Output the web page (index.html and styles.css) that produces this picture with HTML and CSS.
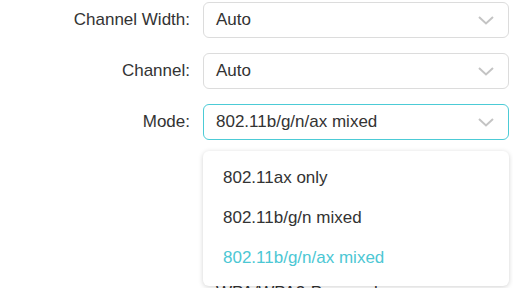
FILE: index.html
```html
<!DOCTYPE html>
<html>
<head>
<meta charset="utf-8">
<link rel="stylesheet" href="styles.css">
</head>
<body>
<div class="form">
  <div class="row">
    <label class="label">Channel Width:</label>
    <div class="select"><span class="value">Auto</span><svg class="chev" width="16" height="9" viewBox="0 0 16 9"><path d="M1 1 L8 7.5 L15 1" fill="none" stroke="#c4c4c4" stroke-width="2"/></svg></div>
  </div>
  <div class="row">
    <label class="label">Channel:</label>
    <div class="select"><span class="value">Auto</span><svg class="chev" width="16" height="9" viewBox="0 0 16 9"><path d="M1 1 L8 7.5 L15 1" fill="none" stroke="#c4c4c4" stroke-width="2"/></svg></div>
  </div>
  <div class="row">
    <label class="label">Mode:</label>
    <div class="select-wrap">
      <div class="select focus"><span class="value">802.11b/g/n/ax mixed</span><svg class="chev" width="16" height="9" viewBox="0 0 16 9"><path d="M1 1 L8 7.5 L15 1" fill="none" stroke="#c4c4c4" stroke-width="2"/></svg></div>
      <ul class="menu">
        <li class="item">802.11ax only</li>
        <li class="item">802.11b/g/n mixed</li>
        <li class="item selected">802.11b/g/n/ax mixed</li>
      </ul>
    </div>
  </div>
  <div class="row below">
    <label class="label"></label>
    <div class="plain">WPA/WPA2-Personal</div>
  </div>
</div>
</body>
</html>
```
FILE: styles.css
```css
html, body {
  margin: 0;
  padding: 0;
  background: #ffffff;
}
body {
  font-family: "Liberation Sans", Arial, sans-serif;
  font-size: 17px;
  color: #333333;
  overflow: hidden;
  width: 513px;
  height: 288px;
}
.form {
  padding-top: 2px;
  display: flex;
  flex-direction: column;
  gap: 15px;
}
.row {
  display: flex;
  align-items: center;
  gap: 13px;
}
.label {
  width: 190px;
  text-align: right;
  color: #333333;
}
.select-wrap {
  position: relative;
}
.select {
  box-sizing: border-box;
  width: 306px;
  height: 36px;
  border: 1px solid #dcdcdc;
  border-radius: 6px;
  display: flex;
  align-items: center;
  justify-content: space-between;
  padding: 0 14px 0 12px;
  background: #fff;
}
.select.focus {
  border-color: #4ccbd6;
}
.value {
  color: #333333;
}
.chev {
  display: block;
  margin-top: 1px;
}
.menu {
  position: absolute;
  left: 0;
  top: 47px;
  width: 306px;
  box-sizing: border-box;
  margin: 0;
  padding: 7px 0 8px;
  list-style: none;
  background: #fff;
  border-radius: 6px;
  box-shadow: 0 1px 5px rgba(0, 0, 0, 0.18);
  z-index: 2;
}
.item {
  height: 40px;
  line-height: 40px;
  padding-left: 20px;
  color: #333333;
}
.item.selected {
  color: #4cc7d4;
}
.below {
  margin-top: 128px;
  line-height: 20px;
}
.plain {
  padding-left: 13px;
  color: #333333;
}
```
